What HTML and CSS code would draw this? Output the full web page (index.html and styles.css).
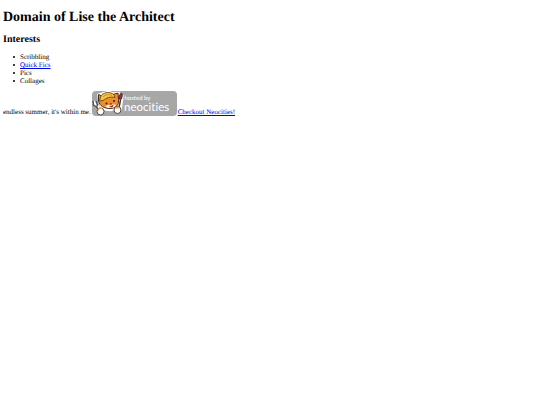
FILE: index.html
```html
<!DOCTYPE html>
<html lang="en">
<head>
    <meta charset="UTF-8">
    <title>Domain of Lise the Architect</title>
    <meta name="viewport" content="width=device-width,initial-scale=1.0">
    <link rel="stylesheet" href="styles.css">
</head>
<body>
<h1>Domain of Lise the Architect</h1>
<h2>Interests</h2>
<ul class="interests">
    <li>Scribbling</li>
    <li><a href="quickfics.html">Quick Fics</a></li>
    <li>Pics</li>
    <li>Collages</li>
</ul>
<div class="footer">
    <span>endless summer, it's within me.</span>
    <svg class="badge" viewBox="0 0 170 50" role="img" aria-label="hosted by neocities">
        <rect width="170" height="50" rx="8" fill="#a7a7a7"/>
        <!-- cat outline -->
        <g fill="#fff" stroke="#fff" stroke-width="3" stroke-linejoin="round">
            <path d="M12 7l9-3 12-3 9 3 12-1 1 14-1 11-6 7-10 4-11-1-9-6-4-9z"/>
            <path d="M3 22l9 10 5 10M60 8l-4 30" fill="none" stroke-width="7"/>
        </g>
        <!-- head and ears -->
        <path d="M13 20l0-13 9 4 16-3 14-4 1 13 0 5c-1 8-7 13-17 13-11 0-21-5-23-15z" fill="#f08c2e" stroke="#4a3022" stroke-width="2" stroke-linejoin="round"/>
        <path d="M27 32c2-4 6-5 9-3 3-3 8-3 12-1-1 4-6 6-11 6-4 0-8-1-10-2z" fill="#fff3df"/>
        <!-- hat -->
        <path d="M16 18c0-9 6-14 15-15 8 0 14 3 15 10-9-2-17 0-24 6l-6 1c-2-1-1-2 0-2z" fill="#f5ca45" stroke="#70501d" stroke-width="2"/>
        <path d="M22 12c5-5 12-6 18-3" fill="none" stroke="#c98b27" stroke-width="2"/>
        <!-- face -->
        <ellipse cx="29" cy="25" rx="2" ry="2" fill="#2c211d"/>
        <ellipse cx="44" cy="20" rx="2" ry="2" fill="#2c211d"/>
        <path d="M35 25h5l-2 3z" fill="#2c211d"/>
        <path d="M33 30c4 1 7-1 10-3 0 4-2 6-5 6z" fill="#a52e29"/>
        <!-- wrench -->
        <path d="M2 20l1 8 6 4 6 8M8 20l3 8-2 4" fill="none" stroke="#4d565b" stroke-width="3"/>
        <!-- brush -->
        <path d="M57 18l-4 20" stroke="#49302b" stroke-width="3"/>
        <path d="M54 16c-1-5 1-8 5-12 2 4 2 8-1 13z" fill="#a42c36" stroke="#49252b" stroke-width="2"/>
        <!-- paws -->
        <circle cx="17" cy="41" r="7" fill="#fff" stroke="#57483f" stroke-width="2"/>
        <path d="M12 39c1-4 4-6 8-4" fill="none" stroke="#eda24e" stroke-width="3"/>
        <circle cx="51" cy="38" r="7" fill="#fff" stroke="#57483f" stroke-width="2"/>
        <path d="M47 35c3-3 6-3 8 0" fill="none" stroke="#eda24e" stroke-width="3"/>
        <text class="badge-small" x="65" y="18">hosted by</text>
        <text class="badge-name" x="64" y="40">neocities</text>
    </svg>
    <a href="https://neocities.org">Checkout Neocities!</a>
</div>
</body>
</html>
```
FILE: styles.css
```css
body {
    margin: 9px 3px;
    background-color: #fff;
    color: #000;
    font-family: "Liberation Serif", "Times New Roman", serif;
    font-size: 7px;
    line-height: 8px;
    text-rendering: geometricPrecision;
}

h1 {
    margin: 0 0 7px;
    font-size: 14px;
    line-height: 18px;
}

h2 {
    margin: 0 0 7px;
    font-size: 10px;
    line-height: 12px;
}

a {
    color: #0000ee;
}

.interests {
    margin: 0 0 6px;
    padding-left: 10px;
    list-style: none;
}

.interests li {
    display: flex;
    align-items: center;
    gap: 5px;
}

.interests li::before {
    content: "";
    width: 2px;
    height: 2px;
    border-radius: 50%;
    background: #000;
}

.footer {
    display: flex;
    flex-wrap: wrap;
    align-items: flex-end;
    gap: 1px;
}

.badge {
    width: 85px;
    height: 25px;
}

.badge-small,
.badge-name {
    fill: #fff;
    font-family: Lato, sans-serif;
    font-variant-ligatures: none;
}

.badge-small {
    font-size: 12px;
}

.badge-name {
    font-size: 23px;
}
```
